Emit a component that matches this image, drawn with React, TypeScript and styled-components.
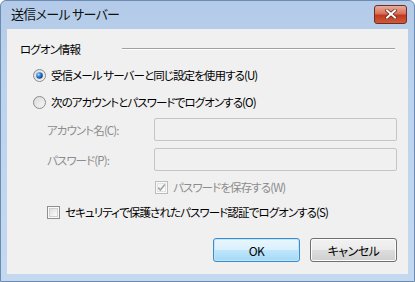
import React from "react";
import styled, { createGlobalStyle } from "styled-components";

const Global = createGlobalStyle`
  html, body { margin: 0; padding: 0; background: #ffffff; }
  body { font-family: "Noto Sans CJK JP", "Noto Sans", sans-serif; }
`;

const Frame = styled.div`
  width: 415px;
  height: 282px;
  box-sizing: border-box;
  border: 1px solid #6b8bb3;
  border-radius: 6px 6px 0 0;
  background: linear-gradient(180deg, #b3cbe8 0%, #bcd3ee 30%, #c4d9f0 100%);
  display: flex;
  flex-direction: column;
  font-feature-settings: "palt";
`;

const TitleBar = styled.div`
  height: 28px;
  display: flex;
  align-items: center;
  justify-content: space-between;
  padding: 0 7px 0 10px;
`;

const Title = styled.span`
  font-size: 13px;
  color: #111;
  letter-spacing: -0.7px;
  margin-top: -3px;
`;

const CloseBtn = styled.div`
  width: 31px;
  height: 17px;
  margin-top: -2px;
  border: 1px solid #6e2d22;
  border-radius: 3px;
  background: linear-gradient(180deg, #e9ab9c 0%, #d9705a 45%, #c2391f 55%, #cf5b3c 100%);
  display: flex;
  align-items: center;
  justify-content: center;
`;

const Client = styled.div`
  flex: 1;
  margin: 0 6px 7px 6px;
  background: #f0f0f0;
  padding: 10px 11px 0 13px;
  display: flex;
  flex-direction: column;
  font-size: 11.5px;
  letter-spacing: -0.9px;
  color: #000;
`;

const GroupHeader = styled.div`
  height: 20px;
  display: flex;
  align-items: center;
  gap: 42px;
`;

const Etched = styled.div`
  flex: 1;
  height: 1px;
  background: #a0a0a0;
  border-bottom: 1px solid #ffffff;
  margin-right: 2px;
`;

const Row = styled.div<{ $top: number; $indent: number; $h?: number }>`
  display: flex;
  align-items: center;
  gap: 4px;
  margin-top: ${(p) => p.$top}px;
  padding-left: ${(p) => p.$indent}px;
  height: ${(p) => p.$h ?? 20}px;
`;

const Label = styled.span<{ $disabled?: boolean }>`
  color: ${(p) => (p.$disabled ? "#8d8d8d" : "#000")};
  white-space: pre;
`;

const FieldLabel = styled(Label)`
  width: 103px;
`;

const Input = styled.div`
  width: 241px;
  height: 21px;
  border: 1px solid #c5c5c5;
  border-radius: 2px;
  background: #f0f0f0;
`;

const ButtonBar = styled.div`
  margin-top: 16px;
  display: flex;
  justify-content: flex-end;
  gap: 10px;
`;

const Button = styled.div<{ $default?: boolean }>`
  width: 85px;
  height: 22px;
  border: 1px solid ${(p) => (p.$default ? "#3a8ccc" : "#707070")};
  border-radius: 3px;
  box-shadow: inset 0 0 0 1px ${(p) => (p.$default ? "#bfe6fb" : "#fcfcfc")};
  background: ${(p) =>
    p.$default
      ? "linear-gradient(180deg, #eaf6fd 0%, #d9f0fc 50%, #bee6fd 50%, #a7d9f5 100%)"
      : "linear-gradient(180deg, #f2f2f2 0%, #ebebeb 50%, #dddddd 50%, #cfcfcf 100%)"};
  display: flex;
  align-items: center;
  justify-content: center;
  font-size: 12px;
  letter-spacing: -0.5px;
  color: #000;
`;

const Radio = ({ checked }: { checked?: boolean }) => (
  <svg width="13" height="13" viewBox="0 0 13 13" style={{ flex: "none", marginRight: 1 }}>
    <defs>
      <linearGradient id={checked ? "rg1" : "rg2"} x1="0" y1="0" x2="1" y2="1">
        <stop offset="0" stopColor="#d4d4d4" />
        <stop offset="1" stopColor="#ffffff" />
      </linearGradient>
      <radialGradient id="dot" cx="0.35" cy="0.35" r="0.7">
        <stop offset="0" stopColor="#a6d8ff" />
        <stop offset="0.5" stopColor="#2c7bd6" />
        <stop offset="1" stopColor="#0d3c80" />
      </radialGradient>
    </defs>
    <circle cx="6.5" cy="6.5" r="6" fill={`url(#${checked ? "rg1" : "rg2"})`} stroke="#8b8b8b" strokeWidth="1" />
    <circle cx="6.5" cy="6.5" r="4.3" fill="none" stroke="#e6e6e6" strokeWidth="1" />
    {checked && <circle cx="6.5" cy="6.5" r="3.3" fill="url(#dot)" />}
  </svg>
);

const Check = ({ checked, disabled }: { checked?: boolean; disabled?: boolean }) => (
  <svg width="13" height="13" viewBox="0 0 13 13" style={{ flex: "none", marginRight: 1 }}>
    <defs>
      <linearGradient id={disabled ? "cg1" : "cg2"} x1="0" y1="0" x2="1" y2="1">
        <stop offset="0" stopColor={disabled ? "#f0f0f0" : "#dcdcdc"} />
        <stop offset="1" stopColor="#ffffff" />
      </linearGradient>
    </defs>
    <rect x="0.5" y="0.5" width="12" height="12" fill="#fafafa" stroke={disabled ? "#bcbcbc" : "#8e8f8f"} />
    <rect x="2.5" y="2.5" width="8" height="8" fill={`url(#${disabled ? "cg1" : "cg2"})`} stroke={disabled ? "#e2e2e2" : "#d0d0d0"} />
    {checked && (
      <path d="M3.2 6.6 L5.4 9 L9.8 3.6" fill="none" stroke={disabled ? "#a5a5a5" : "#333"} strokeWidth="1.6" />
    )}
  </svg>
);

export default function App() {
  return (
    <>
      <Global />
      <Frame>
        <TitleBar>
          <Title>送信メール サーバー</Title>
          <CloseBtn>
            <svg width="12" height="10" viewBox="0 0 12 10">
              <path d="M2 1.5 L10 8.5 M10 1.5 L2 8.5" stroke="#5a2016" strokeWidth="3.4" strokeLinecap="square" />
              <path d="M2 1.5 L10 8.5 M10 1.5 L2 8.5" stroke="#ffffff" strokeWidth="2" strokeLinecap="square" />
            </svg>
          </CloseBtn>
        </TitleBar>
        <Client>
          <GroupHeader>
            <Label>ログオン情報</Label>
            <Etched />
          </GroupHeader>
          <Row $top={6} $indent={13}>
            <Radio checked />
            <Label>受信メール サーバーと同じ設定を使用する(U)</Label>
          </Row>
          <Row $top={7} $indent={13}>
            <Radio />
            <Label>次のアカウントとパスワードでログオンする(O)</Label>
          </Row>
          <Row $top={6} $indent={27} $h={23}>
            <FieldLabel $disabled>アカウント名(C):</FieldLabel>
            <Input />
          </Row>
          <Row $top={7} $indent={27} $h={23}>
            <FieldLabel $disabled>パスワード(P):</FieldLabel>
            <Input />
          </Row>
          <Row $top={6} $indent={135}>
            <Check checked disabled />
            <Label $disabled>パスワードを保存する(W)</Label>
          </Row>
          <Row $top={5} $indent={27}>
            <Check />
            <Label>セキュリティで保護されたパスワード認証でログオンする(S)</Label>
          </Row>
          <ButtonBar>
            <Button $default>OK</Button>
            <Button>キャンセル</Button>
          </ButtonBar>
        </Client>
      </Frame>
    </>
  );
}
